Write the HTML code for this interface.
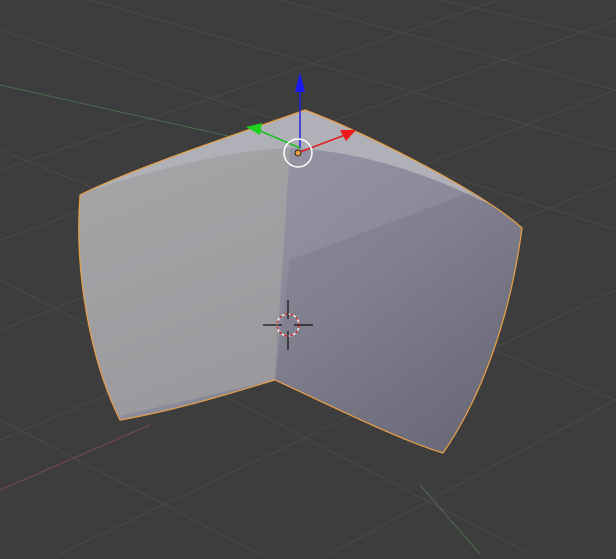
<!DOCTYPE html>
<html><head><style>html,body{margin:0;padding:0;background:#3d3d3d;overflow:hidden}</style></head>
<body>
<svg width="616" height="554" viewBox="0 0 616 554" xmlns="http://www.w3.org/2000/svg">
<defs>
<clipPath id="c"><path d="M305,110 C250,130 140,165 80,195 C74,270 90,360 120,420 C180,410 240,390 275,380 C340,410 400,440 443,453 C480,400 510,320 522,228 C480,190 360,130 305,110Z"/></clipPath>
<linearGradient id="r" x1="0.2" y1="0.2" x2="0.8" y2="0.9"><stop offset="0" stop-color="#9c9cac"/><stop offset="0.5" stop-color="#8a8a9a"/><stop offset="1" stop-color="#686878"/></linearGradient>
<linearGradient id="l" x1="0" y1="0" x2="0.3" y2="1"><stop offset="0" stop-color="#a8a8aa"/><stop offset="1" stop-color="#9a9a9e"/></linearGradient>
</defs>
<rect width="616" height="554" fill="#3d3d3d"/>
<g stroke="#4a4a4a" stroke-width="1" fill="none">
<line x1="0" y1="170" x2="616" y2="-40"/>
<line x1="0" y1="240" x2="616" y2="20"/>
<line x1="0" y1="330" x2="616" y2="90"/>
<line x1="0" y1="440" x2="616" y2="180"/>
<line x1="60" y1="554" x2="616" y2="290"/>
<line x1="330" y1="554" x2="616" y2="400"/>
<line x1="0" y1="30" x2="616" y2="230"/>
<line x1="90" y1="0" x2="616" y2="150"/>
<line x1="280" y1="0" x2="616" y2="90"/>
<line x1="440" y1="0" x2="616" y2="40"/>
<line x1="0" y1="150" x2="616" y2="400"/>
<line x1="0" y1="280" x2="530" y2="554"/>
<line x1="0" y1="420" x2="260" y2="554"/>
</g>
<line x1="0" y1="85" x2="300" y2="152" stroke="#4e6a4e"/>
<line x1="420" y1="485" x2="480" y2="554" stroke="#4e6a4e"/>
<line x1="0" y1="490" x2="150" y2="425" stroke="#7a4a4a"/>
<g clip-path="url(#c)">
<rect x="0" y="0" width="616" height="554" fill="url(#r)"/>
<path d="M305,100 L60,190 L60,430 L275,380 L290,148 Z" fill="url(#l)"/>
<path d="M305,100 L60,200 C150,170 230,150 290,148 C350,150 420,170 480,200 L530,220Z" fill="#b0b0b8"/>
<g fill="#000" opacity="0.06">
<path d="M290,260 L530,170 L530,554 L275,380Z"/>
<path d="M285,310 L530,220 L530,554 L275,380Z"/>
<path d="M280,350 L530,270 L530,554 L275,380Z"/>
<path d="M290,380 L530,320 L530,554Z"/>
<path d="M320,400 L530,370 L530,554Z"/>
</g>
</g>
<path d="M305,110 C250,130 140,165 80,195 C74,270 90,360 120,420 C180,410 240,390 275,380 C340,410 400,440 443,453 C480,400 510,320 522,228 C480,190 360,130 305,110Z" fill="none" stroke="#e8a048" stroke-width="1.2"/>
<line x1="300" y1="148" x2="300" y2="86" stroke="#2020e0" stroke-width="1.5"/>
<path d="M300,72 L295,92 L305,92Z" fill="#1a1af0"/>
<line x1="300" y1="148" x2="258" y2="130" stroke="#20c020" stroke-width="1.5"/>
<path d="M246,127 L262,123 L260,135Z" fill="#20d020"/>
<line x1="300" y1="152" x2="345" y2="135" stroke="#e02020" stroke-width="1.5"/>
<path d="M356,130 L340,130 L346,141Z" fill="#f01818"/>
<circle cx="298" cy="153" r="14" fill="none" stroke="#fff" stroke-width="1.5"/>
<circle cx="298" cy="153" r="3" fill="#e8a048" stroke="#000" stroke-width="0.8"/>
<circle cx="288" cy="325" r="11" fill="none" stroke="#fff" stroke-width="1.3"/>
<circle cx="288" cy="325" r="11" fill="none" stroke="#d02020" stroke-width="1.3" stroke-dasharray="3 3"/>
<g stroke="#111" stroke-width="1.2"><line x1="263" y1="325" x2="282" y2="325"/><line x1="294" y1="325" x2="313" y2="325"/><line x1="288" y1="300" x2="288" y2="319"/><line x1="288" y1="331" x2="288" y2="350"/></g>
</svg>
</body></html>
